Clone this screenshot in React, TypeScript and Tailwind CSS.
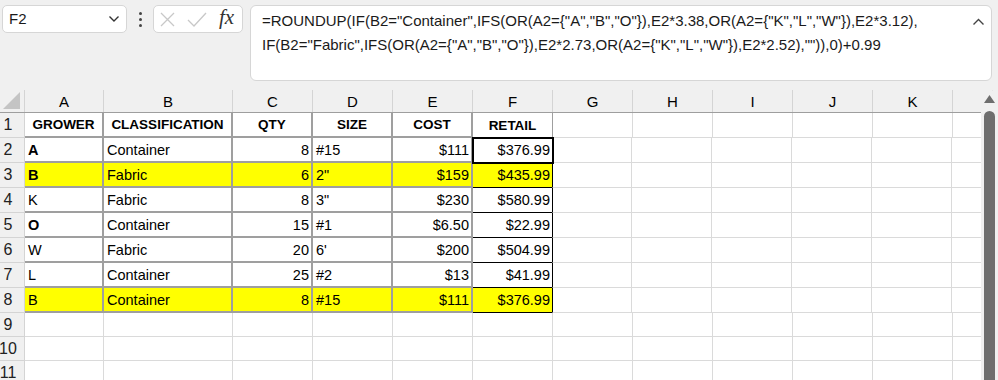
import React from "react";

type Cell = {
  text?: string;
  bold?: boolean;
  align?: "left" | "right" | "center";
};

const COLS = ["A", "B", "C", "D", "E", "F", "G", "H", "I", "J", "K", ""];
const WIDTHS = ["w-[79px]", "w-[129px]", "w-[80px]", "w-[80px]", "w-[80px]", "w-[80px]", "w-[80px]", "w-[80px]", "w-[80px]", "w-[80px]", "w-[80px]", "w-[40px]"];

const rows: { yellow?: boolean; cells: Cell[] }[] = [
  {
    cells: [
      { text: "GROWER", bold: true, align: "center" },
      { text: "CLASSIFICATION", bold: true, align: "center" },
      { text: "QTY", bold: true, align: "center" },
      { text: "SIZE", bold: true, align: "center" },
      { text: "COST", bold: true, align: "center" },
      { text: "RETAIL", bold: true, align: "center" },
    ],
  },
  { cells: [{ text: "A", bold: true }, { text: "Container" }, { text: "8", align: "right" }, { text: "#15" }, { text: "$111", align: "right" }, { text: "$376.99", align: "right" }] },
  { yellow: true, cells: [{ text: "B", bold: true }, { text: "Fabric" }, { text: "6", align: "right" }, { text: '2"' }, { text: "$159", align: "right" }, { text: "$435.99", align: "right" }] },
  { cells: [{ text: "K" }, { text: "Fabric" }, { text: "8", align: "right" }, { text: '3"' }, { text: "$230", align: "right" }, { text: "$580.99", align: "right" }] },
  { cells: [{ text: "O", bold: true }, { text: "Container" }, { text: "15", align: "right" }, { text: "#1" }, { text: "$6.50", align: "right" }, { text: "$22.99", align: "right" }] },
  { cells: [{ text: "W" }, { text: "Fabric" }, { text: "20", align: "right" }, { text: "6'" }, { text: "$200", align: "right" }, { text: "$504.99", align: "right" }] },
  { cells: [{ text: "L" }, { text: "Container" }, { text: "25", align: "right" }, { text: "#2" }, { text: "$13", align: "right" }, { text: "$41.99", align: "right" }] },
  { yellow: true, cells: [{ text: "B" }, { text: "Container" }, { text: "8", align: "right" }, { text: "#15" }, { text: "$111", align: "right" }, { text: "$376.99", align: "right" }] },
];

function FormulaBar() {
  return (
    <div className="flex items-start gap-[7px] px-[2px] pt-[5px] h-[90px] bg-[#f0f0f0]">
      <div className="flex items-center justify-between w-[125px] h-[28px] bg-white border border-[#d6d6d6] rounded-[5px] pl-[6px] pr-[6px]">
        <span className="text-[15px] text-[#1a1a1a]">F2</span>
        <svg width="12" height="8" viewBox="0 0 12 8" fill="none" stroke="#333" strokeWidth="1.4">
          <path d="M1.5 1.5 L6 6 L10.5 1.5" />
        </svg>
      </div>
      <div className="flex flex-col items-center justify-center gap-[3px] h-[28px] w-[12px]">
        <span className="block w-[3px] h-[3px] rounded-full bg-[#444]" />
        <span className="block w-[3px] h-[3px] rounded-full bg-[#444]" />
        <span className="block w-[3px] h-[3px] rounded-full bg-[#444]" />
      </div>
      <div className="flex items-center w-[90px] h-[28px] bg-white border border-[#d6d6d6] rounded-[5px] pl-[6px] gap-[12px]">
        <svg width="15" height="15" viewBox="0 0 15 15" stroke="#c8c8c8" strokeWidth="1.3" fill="none">
          <path d="M1 1 L14 14 M14 1 L1 14" />
        </svg>
        <svg width="20" height="15" viewBox="0 0 20 15" stroke="#c8c8c8" strokeWidth="1.3" fill="none">
          <path d="M1 8 L7 14 L19 1" />
        </svg>
        <span className="text-[21px] italic leading-none text-[#333] -mt-[3px]" style={{ fontFamily: '"Liberation Serif", serif' }}>
          fx
        </span>
      </div>
      <div className="relative flex-1 h-[76px] bg-white border border-[#d6d6d6] rounded-[6px] mr-[4px] pl-[11px] pt-[3px] text-[15px] leading-[24px] text-[#1a1a1a]">
        <div className="whitespace-pre">=ROUNDUP(IF(B2="Container",IFS(OR(A2={"{"}"A","B","O"{"}"}),E2*3.38,OR(A2={"{"}"K","L","W"{"}"}),E2*3.12),</div>
        <div className="whitespace-pre">IF(B2="Fabric",IFS(OR(A2={"{"}"A","B","O"{"}"}),E2*2.73,OR(A2={"{"}"K","L","W"{"}"}),E2*2.52),"")),0)+0.99</div>
        <svg className="absolute right-[6px] top-[12px]" width="13" height="8" viewBox="0 0 13 8" fill="none" stroke="#444" strokeWidth="1.4">
          <path d="M1.5 6.5 L6.5 1.5 L11.5 6.5" />
        </svg>
      </div>
    </div>
  );
}

function ColumnHeader() {
  return (
    <div className="flex h-[23px] bg-[#f0f0f0] border-b border-[#9e9e9e]">
      <div className="w-[25px] h-full flex items-end justify-end pr-[4px] pb-[3px] border-r border-[#d4d4d4]">
        <svg width="17" height="17" viewBox="0 0 17 17">
          <path d="M17 0 L17 17 L0 17 Z" fill="#c4c4c4" />
        </svg>
      </div>
      {COLS.map((c, i) => (
        <div
          key={i}
          className={`${WIDTHS[i]} h-full flex items-center justify-center text-[15px] text-black border-r border-[#d4d4d4] pt-[2px]`}
        >
          {c}
        </div>
      ))}
    </div>
  );
}

function DataRow({ n, yellow, cells }: { n: number; yellow?: boolean; cells: Cell[] }) {
  return (
    <div className="flex h-[25px]">
      <div className="w-[25px] h-full flex items-center justify-center pr-[8px] text-[16px] text-[#222] bg-[#f0f0f0] border-r border-b border-[#d4d4d4]">
        {n}
      </div>
      {COLS.map((_, i) => {
        const cell = cells[i];
        const inData = i < 6;
        const isF = i === 5;
        let border = "border-r border-b border-[#dadada]";
        if (inData && !isF) border = "border-r-2 border-b-2 border-[#9f9f9f]";
        if (isF && n === 1) border = "border-r border-b border-r-[#9f9f9f] border-b-black";
        else if (isF) border = "border-r border-b border-black";
        if (i === 6 && n >= 2) border = "border-r border-b border-[#dadada] border-l border-l-black -ml-px";
        const bg = inData && yellow ? "bg-[#ffff00]" : "bg-white";
        const align =
          cell?.align === "right" ? "justify-end pr-[2px]" : cell?.align === "center" ? "justify-center" : "justify-start pl-[3px]";
        return (
          <div
            key={i}
            className={`${WIDTHS[i]} h-full flex items-center pt-[2px] overflow-hidden whitespace-nowrap ${border} ${bg} ${align} ${
              cell?.bold ? (n === 1 ? "font-bold text-[13.5px]" : "font-bold text-[14.5px]") : "text-[14.5px]"
            } text-black`}
          >
            {cell?.text}
          </div>
        );
      })}
    </div>
  );
}

function EmptyRow({ n }: { n: number }) {
  return (
    <div className="flex h-[24px]">
      <div className="w-[25px] h-full flex items-center justify-center pr-[8px] text-[16px] text-[#222] bg-[#f0f0f0] border-r border-b border-[#d4d4d4]">
        {n}
      </div>
      {COLS.map((_, i) => (
        <div key={i} className={`${WIDTHS[i]} h-full bg-white border-r border-b border-[#dadada]`} />
      ))}
    </div>
  );
}

export default function App() {
  return (
    <div className="w-[998px] h-[380px] overflow-hidden bg-white" style={{ fontFamily: '"Liberation Sans", Arial, sans-serif' }}>
      <FormulaBar />
      <div className="relative">
        <ColumnHeader />
        {rows.map((r, idx) => (
          <DataRow key={idx} n={idx + 1} yellow={r.yellow} cells={r.cells} />
        ))}
        <EmptyRow n={9} />
        <EmptyRow n={10} />
        <EmptyRow n={11} />
        {/* selected cell F2 */}
        <div className="absolute left-[472px] top-[47px] w-[82px] h-[27px] border-2 border-black pointer-events-none" />
        {/* vertical scrollbar */}
        <div className="absolute right-0 top-0 w-[17px] h-full bg-[#f0f0f0] rounded-t-[8px] flex flex-col items-center pt-[5px]">
          <svg width="11" height="8" viewBox="0 0 11 8">
            <path d="M5.5 0 L11 8 L0 8 Z" fill="#6e6e6e" />
          </svg>
          <div className="mt-[8px] w-[11px] flex-1 bg-[#6e6e6e] rounded-t-[6px]" />
        </div>
      </div>
    </div>
  );
}
